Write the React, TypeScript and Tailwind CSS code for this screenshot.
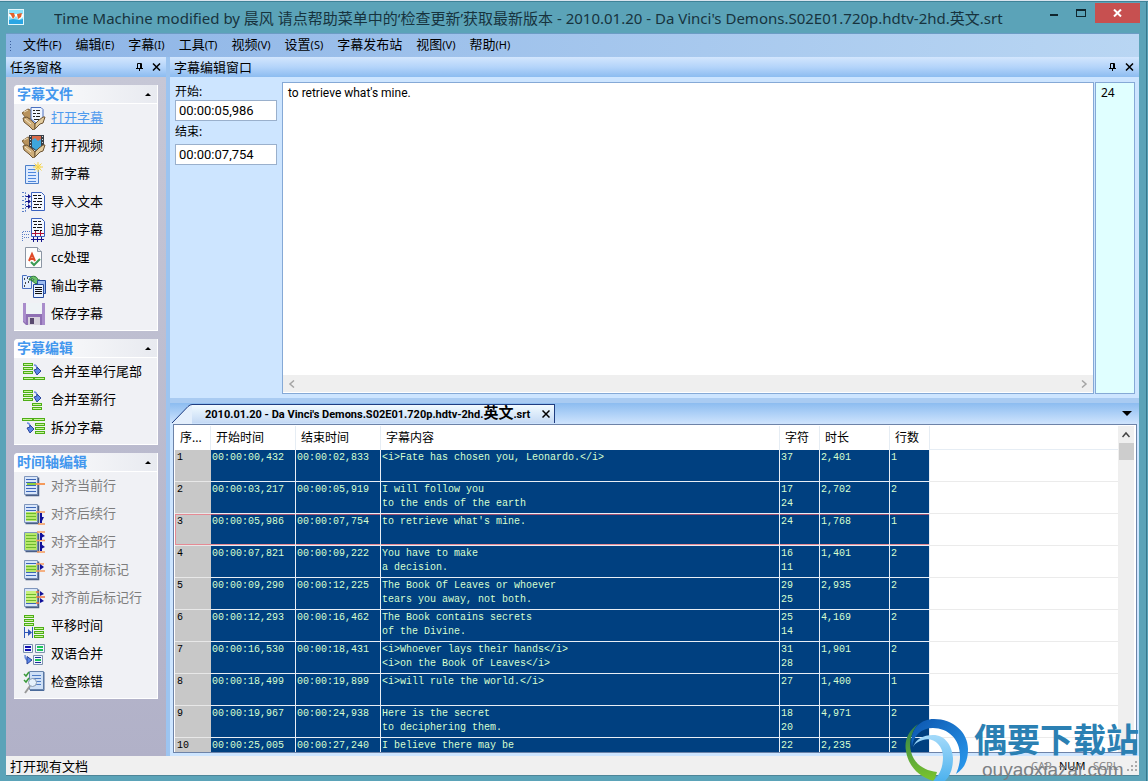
import type { ReactNode } from "react";

/* ---------- data ---------- */

const MENUS = [
  ["文件", "(F)"],
  ["编辑", "(E)"],
  ["字幕", "(I)"],
  ["工具", "(T)"],
  ["视频", "(V)"],
  ["设置", "(S)"],
  ["字幕发布站", ""],
  ["视图", "(V)"],
  ["帮助", "(H)"],
];

const ROWS = [
  { start: "00:00:00,432", end: "00:00:02,833", text: ["<i>Fate has chosen you, Leonardo.</i>"], chars: ["37"], time: "2,401", lines: "1" },
  { start: "00:00:03,217", end: "00:00:05,919", text: ["I will follow you", "to the ends of the earth"], chars: ["17", "24"], time: "2,702", lines: "2" },
  { start: "00:00:05,986", end: "00:00:07,754", text: ["to retrieve what's mine."], chars: ["24"], time: "1,768", lines: "1" },
  { start: "00:00:07,821", end: "00:00:09,222", text: ["You have to make", "a decision."], chars: ["16", "11"], time: "1,401", lines: "2" },
  { start: "00:00:09,290", end: "00:00:12,225", text: ["The Book Of Leaves or whoever", "tears you away, not both."], chars: ["29", "25"], time: "2,935", lines: "2" },
  { start: "00:00:12,293", end: "00:00:16,462", text: ["The Book contains secrets", "of the Divine."], chars: ["25", "14"], time: "4,169", lines: "2" },
  { start: "00:00:16,530", end: "00:00:18,431", text: ["<i>Whoever lays their hands</i>", "<i>on the Book Of Leaves</i>"], chars: ["31", "28"], time: "1,901", lines: "2" },
  { start: "00:00:18,499", end: "00:00:19,899", text: ["<i>will rule the world.</i>"], chars: ["27"], time: "1,400", lines: "1" },
  { start: "00:00:19,967", end: "00:00:24,938", text: ["Here is the secret", "to deciphering them."], chars: ["18", "20"], time: "4,971", lines: "2" },
  { start: "00:00:25,005", end: "00:00:27,240", text: ["I believe there may be"], chars: ["22"], time: "2,235", lines: "2" },
];

const CURRENT_ROW = 2;

/* ---------- icon parts ---------- */

const Svg = ({ children }: { children: ReactNode }) => (
  <svg width="24" height="24" viewBox="0 0 24 24" fill="none" aria-hidden="true" className="shrink-0">
    {children}
  </svg>
);

// two cupped hands, whatever they hold is drawn between back and front
const Hands = ({ children }: { children: ReactNode }) => (
  <>
    <path d="M0 7l6-4 4 2v8l-6-1z" fill="#b8925c" stroke="#7a5c34" />
    <path d="M2 6l4-2" stroke="#f4e6c6" />
    {children}
    <path d="M1 12l4-1 5 4 3 3v5l-2 1-4-4-5-4z" fill="#cfae7a" stroke="#6d5433" />
    <path d="M23 11l-2 6-3 1-5 5v-5l4-4 4-3z" fill="#e2cb9e" stroke="#6d5433" />
    <path d="M3 13l6 5" stroke="#f6ead0" />
  </>
);

const Page = ({ color = "#3b66b8" }: { color?: string }) => (
  <>
    <path d="M2.500 2.500h13v18h-13z" fill="#d9e6fa" stroke="#7f96bd" />
    <path d="M16.500 3.500v18h-13" stroke="#4a5f86" strokeWidth="1.500" />
    <path d="M4 5.500h10M4 8.500h10M4 11.500h10M4 14.500h10M4 17.500h10" stroke={color} />
  </>
);

const Bars = ({ x, y, n = 3, w = 9 }: { x: number; y: number; n?: number; w?: number }) => (
  <>
    {Array.from({ length: n }, (_, i) => (
      <rect key={i} x={x + 0.5} y={y + 0.5 + i * 4} width={w} height="2" fill="#c9f59b" stroke="#4eae17" />
    ))}
  </>
);

const BlueArrow = ({ x, y }: { x: number; y: number }) => (
  <g transform={`translate(${x} ${y})`}>
    <path d="M0 0c2 0 3 2 3 4" stroke="#6d8de0" strokeWidth="1.500" />
    <path d="M0 5l3-1V2l4 4-4 4z" fill="#5b86e6" stroke="#2b469c" />
  </g>
);

const Dots = ({ x, y }: { x: number; y: number }) => (
  <g transform={`translate(${x} ${y})`}>
    <path d="M0.500 0.500h10l3 3v15h-13z" fill="#f4f8ff" stroke="#3a62c0" />
    <path d="M2 3.500h4m1 0h3M3 6.500h3m1 0h4M2 9.500h3m1 0h5M3 12.500h5m1 0h2M2 15.500h4m1 0h3" stroke="#111" />
  </g>
);

const ICONS: Record<string, ReactNode> = {
  openSub: (
    <Svg>
      <Hands>
        <path d="M9 1.500h10l2 2V13l-7 4-5-4z" fill="#eff5ff" stroke="#4a70c0" />
        <path d="M11 4.500h2m1 0h4M11 7.500h3m1 0h3M11 10.500h2m1 0h4M12 13.500h5" stroke="#222" />
      </Hands>
    </Svg>
  ),
  openVideo: (
    <Svg>
      <Hands>
        <path d="M7 1h15v12l-8 4-7-4z" fill="#3a4048" />
        <path d="M10 2h9v5h-9z" fill="#d96a48" />
        <path d="M10 6l3-2 3 3 3-2v8l-5 3-4-3z" fill="#3da6dc" />
        <path d="M8.500 2v10M20.500 2v11" stroke="#d8dde2" strokeDasharray="1 2" />
      </Hands>
    </Svg>
  ),
  newSub: (
    <Svg>
      <path d="M3.500 3.500h13v18h-13z" fill="#dceaff" stroke="#4d7fc8" />
      <path d="M6 7.500h8M6 10.500h8M6 13.500h8M6 16.500h8M6 19.500h8" stroke="#4d86dc" />
      <circle cx="16" cy="5" r="3" fill="#fff09a" />
      <path d="M16 0v10M11 5h10M12.500 1.500l7 7M19.500 1.500l-7 7" stroke="#f0cf50" />
    </Svg>
  ),
  importText: (
    <Svg>
      <path d="M0 2.500h3.500v19H0M0 6.500h2M0 10.500h2M0 14.500h2M0 18.500h2" stroke="#5b7fc8" strokeDasharray="2 1" />
      <Dots x={9} y={2} />
      <path d="M4 6.500h3M4 11.500h3M4 16.500h3" stroke="#14148a" />
      <path d="M6 4l3 2.500L6 9zM6 9l3 2.500L6 14zM6 14l3 2.500L6 19z" fill="#14148a" />
    </Svg>
  ),
  appendSub: (
    <Svg>
      <path d="M0.500 23V13.500H8M2 16.500h6M2 19.500h6" stroke="#5b7fc8" strokeDasharray="1 1" />
      <Dots x={9} y={0} />
      <path d="M10 15.500h12M13.500 13v5M18.500 13v5" stroke="#b01030" />
      <path d="M9 21.500h13M11.500 19v5M15.500 19v5M19.500 19v5" stroke="#14148a" />
    </Svg>
  ),
  cc: (
    <Svg>
      <path d="M3.500 1.500h12l4 4v16h-16z" fill="#fdfdfd" stroke="#8c96a4" />
      <path d="M15.500 1.500v4h4" fill="#dfe5ec" stroke="#8c96a4" />
      <path d="M7 15l3-7 3 7M8 13h4" stroke="#e04a28" strokeWidth="2" />
      <path d="M9 16l3 3 6-6" stroke="#3c9a54" strokeWidth="2" />
    </Svg>
  ),
  exportSub: (
    <Svg>
      <path d="M0.500 1.500h4l1 1h4v12h-9z" fill="#e3eeff" stroke="#4a70c0" />
      <path d="M2 5h1M5 4h1M3 9h1M6 8h1M2 12h1" stroke="#111" strokeWidth="1.500" />
      <path d="M7 6c1-5 8-5 9 0h2l-4 4-5-4h3c-1-2-3-2-3 0z" fill="#6cc06a" stroke="#2c7a38" />
      <path d="M15.500 6.500h8v13h-8z" fill="#9dbcf0" stroke="#244a9c" />
      <path d="M11.500 10.500h10v13h-10z" fill="#e8f1ff" stroke="#244a9c" />
      <path d="M13 13.500h7M13 15.500h7M13 17.500h7M13 19.500h7" stroke="#111" />
    </Svg>
  ),
  save: (
    <Svg>
      <path d="M1 1h22v22H4l-3-3z" fill="#8f70b4" />
      <path d="M1 1h3v20l-3-2zM20 1h3v22h-3z" fill="#a98ccb" />
      <path d="M4 1h16v11H4z" fill="#eef3f6" />
      <path d="M6 15h12v8H6z" fill="#d7d2dd" />
      <path d="M8 16h4v6H8z" fill="#58486e" />
    </Svg>
  ),
  mergeTail: (
    <Svg>
      <Bars x={1} y={3} />
      <BlueArrow x={12} y={5} />
      <Bars x={1} y={17} n={1} w={10} />
      <Bars x={12} y={17} n={1} w={10} />
    </Svg>
  ),
  mergeNew: (
    <Svg>
      <Bars x={1} y={2} />
      <BlueArrow x={12} y={4} />
      <Bars x={10} y={15} n={2} />
    </Svg>
  ),
  split: (
    <Svg>
      <Bars x={0} y={2} n={1} w={10} />
      <Bars x={11} y={2} n={1} w={11} />
      <BlueArrow x={5} y={7} />
      <Bars x={13} y={7} />
    </Svg>
  ),
  alignCurrent: (
    <Svg>
      <Page />
      <path d="M5 10h9" stroke="#8fce3c" strokeWidth="2" />
      <path d="M14 10h9" stroke="#f59a5c" strokeWidth="2" />
    </Svg>
  ),
  alignNext: (
    <Svg>
      <Page />
      <path d="M4 10h11v9H4z" fill="#b7e86b" />
      <path d="M4 11.500h10M4 14.500h10M4 17.500h10" stroke="#6cba2c" />
      <path d="M14 10h9M16 22h7" stroke="#f59a5c" strokeWidth="1.500" />
      <path d="M19 11v10" stroke="#10109a" strokeWidth="2" />
      <path d="M18 15h4l-3 6z" fill="#10109a" />
    </Svg>
  ),
  alignAll: (
    <Svg>
      <Page />
      <path d="M3 3h12v17H3z" fill="#b7e86b" />
      <path d="M4 5.500h10M4 8.500h10M4 11.500h10M4 14.500h10M4 17.500h10" stroke="#6cba2c" />
      <path d="M15 2h8M14 10.500h9M15 22h8" stroke="#f59a5c" strokeWidth="1.500" />
      <path d="M19 3v7M19 12v9" stroke="#10109a" strokeWidth="2" />
      <path d="M19 3l4 3-4 2zM19 14l4 3-4 2z" fill="#10109a" />
    </Svg>
  ),
  alignPrev: (
    <Svg>
      <Page />
      <path d="M4 7h11v7H4z" fill="#b7e86b" />
      <path d="M4 8.500h10M4 11.500h10" stroke="#6cba2c" />
      <path d="M14 6h8M14 13h9" stroke="#f59a5c" strokeWidth="1.500" />
      <path d="M18 6l4 3-4 3z" fill="#10109a" />
    </Svg>
  ),
  alignBoth: (
    <Svg>
      <Page />
      <path d="M4 5h11v12H4z" fill="#c9f07e" />
      <path d="M4 8.500h10M4 11.500h10M4 14.500h10" stroke="#6cba2c" />
      <path d="M14 6h3M14 11h9M14 17h3" stroke="#f0703c" strokeWidth="1.500" />
      <path d="M18 5l4 3-4 2zM18 12l4 3-4 2z" fill="#10109a" />
    </Svg>
  ),
  shift: (
    <Svg>
      <Bars x={2} y={1} />
      <Bars x={12} y={13} />
      <path d="M2.500 13v11M10.500 13v11M3 18.500h4" stroke="#2f56b8" />
      <path d="M6 15l4 3.500L6 22z" fill="#2f56b8" />
    </Svg>
  ),
  bilingual: (
    <Svg>
      <path d="M1.500 2.500h9v8h-9zM13.500 2.500h9v8h-9zM11.500 13.500h9v9h-9z" fill="#f0f6ff" stroke="#7c90ac" />
      <path d="M3 5h6M3 8h6" stroke="#1010b0" strokeWidth="2" />
      <path d="M15 5h6M15 8h6M13 18h6" stroke="#1cc45a" strokeWidth="2" />
      <path d="M13 15.500h6M13 20.500h6" stroke="#1a2a9a" />
      <path d="M3 13c0 3 1 5 3 5" stroke="#6d8de0" strokeWidth="1.500" />
      <path d="M5 14.500l5 3.500-5 4z" fill="#5b86e6" stroke="#2b469c" />
    </Svg>
  ),
  check: (
    <Svg>
      <path d="M7.500 1.500h14v18h-14z" fill="#cfe0f6" stroke="#6884ad" />
      <path d="M22 2v18.500H8" stroke="#4a6a9a" />
      <path d="M10 5.500h9M10 8.500h9M14 11.500h5M14 14.500h5" stroke="#4f7cc4" />
      <path d="M2 4l2 2 3-4M2 10l2 2 3-4" stroke="#3a9a3a" strokeWidth="1.500" />
      <circle cx="10.500" cy="12.500" r="4" fill="#e6f1fb" stroke="#8a9bb0" />
      <path d="M8 16l-5 7" stroke="#9a9a9a" strokeWidth="2" />
    </Svg>
  ),
};

const SECTIONS = [
  {
    title: "字幕文件",
    items: [
      { icon: "openSub", label: "打开字幕", hot: true },
      { icon: "openVideo", label: "打开视频" },
      { icon: "newSub", label: "新字幕" },
      { icon: "importText", label: "导入文本" },
      { icon: "appendSub", label: "追加字幕" },
      { icon: "cc", label: "cc处理" },
      { icon: "exportSub", label: "输出字幕" },
      { icon: "save", label: "保存字幕" },
    ],
  },
  {
    title: "字幕编辑",
    items: [
      { icon: "mergeTail", label: "合并至单行尾部" },
      { icon: "mergeNew", label: "合并至新行" },
      { icon: "split", label: "拆分字幕" },
    ],
  },
  {
    title: "时间轴编辑",
    items: [
      { icon: "alignCurrent", label: "对齐当前行", disabled: true },
      { icon: "alignNext", label: "对齐后续行", disabled: true },
      { icon: "alignAll", label: "对齐全部行", disabled: true },
      { icon: "alignPrev", label: "对齐至前标记", disabled: true },
      { icon: "alignBoth", label: "对齐前后标记行", disabled: true },
      { icon: "shift", label: "平移时间" },
      { icon: "bilingual", label: "双语合并" },
      { icon: "check", label: "检查除错" },
    ],
  },
];

/* ---------- window chrome ---------- */

const TitleBar = () => (
  <header className="-mr-px flex h-[31px] shrink-0 items-start pt-px pl-[2px]">
    <svg width="16" height="16" viewBox="0 0 16 16" className="mt-[6px] shrink-0" aria-hidden="true">
      <rect x="0.500" y="0.500" width="15" height="15" fill="#8be2fa" stroke="#e4f7fc" />
      <path d="M1 5h14v3l-4 3-3-4-3 3-4-3z" fill="#fff" />
      <path d="M1 4h5l1 3-2 3-2-4zM9 5l5-1-1 4-3 2z" fill="#e2622c" />
      <path d="M1 11l4-1 6 1 4-1v5H1z" fill="#2aa6e4" />
    </svg>
    <h1 className="ml-[30px] flex-1 truncate text-[15px] leading-[30px] text-[#17333e]">
      Time Machine modified by 晨风 请点帮助菜单中的‘检查更新’获取最新版本 - 2010.01.20 - Da Vinci's
      Demons.S02E01.720p.hdtv-2hd.英文.srt
    </h1>
    <button aria-label="最小化" className="flex h-5 w-[26px] items-center justify-center pt-1">
      <span className="h-[2px] w-2 bg-[#10262e]" />
    </button>
    <button aria-label="最大化" className="flex h-5 w-[28px] items-center justify-center">
      <span className="h-2 w-[10px] border border-t-2 border-[#10262e]" />
    </button>
    <button aria-label="关闭" className="flex h-5 w-[45px] items-center justify-center bg-[#c75050]">
      <svg width="9" height="8" viewBox="0 0 9 8" stroke="#fff" strokeWidth="2">
        <path d="M1 0.500l7 7M8 0.500l-7 7" />
      </svg>
    </button>
  </header>
);

const MenuBar = () => (
  <nav className="flex h-6 shrink-0 items-center gap-3 border-t border-[#6b9cc4] bg-linear-to-r from-[#8db4e6] to-[#b9d6f3] pl-1 text-[13px]">
    <span className="flex flex-col gap-[2px]">
      {[0, 1, 2, 3].map((dot) => (
        <span key={dot} className="size-[1px] bg-[#3c5f9c]" />
      ))}
    </span>
    <div className="flex gap-[14px] pb-[2px]">
      {MENUS.map(([name, key]) => (
        <button key={name} className="flex items-baseline whitespace-nowrap leading-5">
          {name}
          <span className="text-[11px]">{key}</span>
        </button>
      ))}
    </div>
  </nav>
);

const PaneHeader = ({ title }: { title: string }) => (
  <div className="flex h-5 shrink-0 items-center bg-linear-to-b from-[#d3e6fd] via-[#b4d4fa] to-[#8cbcf0] pr-[3px] pb-px pl-1 text-[13px]">
    <h2 className="flex-1 leading-[18px]">{title}</h2>
    <button aria-label="固定" className="p-[5px]">
      <svg width="7" height="8" viewBox="0 0 7 8" stroke="#000" fill="none">
        <path d="M1.500 5V0.500h4V5M4.500 0v5M0 5.500h7M3.500 5v3" />
      </svg>
    </button>
    <button aria-label="关闭窗格" className="ml-[2px] p-[2px]">
      <svg width="9" height="8" viewBox="0 0 9 8" stroke="#000" strokeWidth="1.500">
        <path d="M1 0.500l7 7M8 0.500l-7 7" />
      </svg>
    </button>
  </div>
);

const TaskPane = () => (
  <aside className="flex w-40 shrink-0 flex-col">
    <PaneHeader title="任务窗格" />
    <div className="flex flex-1 flex-col gap-2 overflow-hidden bg-linear-to-b from-[#c6c7d6] to-[#b1b1c8] px-2 pt-2">
      {SECTIONS.map((section) => (
        <section key={section.title} className="shrink-0 rounded-tl border-r border-b border-white bg-[#f0f1f5] pb-[2px]">
          <div className="flex h-[19px] items-center justify-between rounded-tl border-b border-white bg-linear-to-r from-white to-[#e8eaf0] pr-[6px] pl-[3px]">
            <h3 className="text-[14px] leading-5 font-bold text-[#4397ee]">{section.title}</h3>
            <span className="border-x-[3px] border-b-[3px] border-x-transparent border-b-black" />
          </div>
          {section.items.map((item) => (
            <button
              key={item.label}
              disabled={"disabled" in item}
              className="flex h-7 w-full items-center gap-[5px] pl-2 text-left text-[13px] whitespace-nowrap disabled:text-[#7d7d7d]"
            >
              {ICONS[item.icon]}
              <span className={"hot" in item ? "text-[#4f9bee] underline" : ""}>{item.label}</span>
            </button>
          ))}
        </section>
      ))}
    </div>
  </aside>
);

const Chevron = ({ d }: { d: string }) => (
  <svg width="8" height="8" viewBox="0 0 8 8" fill="none" stroke="currentColor" strokeWidth="1.500">
    <path d={d} />
  </svg>
);

const TIME_INPUT =
  "h-[21px] border border-[#9ab0cc] bg-white px-[3px] font-['Roboto',sans-serif] text-[13px]";

const EditorPane = () => (
  <section className="flex h-[341px] shrink-0 flex-col bg-[#cde5ff]">
    <PaneHeader title="字幕编辑窗口" />
    <div className="flex flex-1 pt-[5px] pr-1 pb-1 pl-[5px]">
      <div className="flex w-[102px] shrink-0 flex-col text-[12px]">
        <label htmlFor="start" className="h-[18px] leading-5">
          开始:
        </label>
        <input id="start" defaultValue="00:00:05,986" className={TIME_INPUT} />
        <label htmlFor="end" className="h-[23px] leading-[22px]">
          结束:
        </label>
        <input id="end" defaultValue="00:00:07,754" className={TIME_INPUT} />
      </div>
      <div className="ml-[5px] flex min-w-0 flex-1 flex-col border border-[#85a9d6] bg-white">
        <textarea
          aria-label="字幕文本"
          defaultValue="to retrieve what's mine."
          className="block w-full flex-1 resize-none px-[5px] py-[2px] font-['Roboto',sans-serif] text-[12px] leading-4 outline-none"
        />
        <div className="mb-px flex h-[17px] items-center justify-between bg-[#efefef] px-[5px] text-[#a5a5a5]">
          <button aria-label="向左滚动">
            <Chevron d="M6 0.500L2 4l4 3.500" />
          </button>
          <button aria-label="向右滚动">
            <Chevron d="M2 0.500L6 4l-4 3.500" />
          </button>
        </div>
      </div>
      <output className="ml-px w-10 border border-[#85a9d6] bg-[#e0ffff] px-[5px] py-[2px] text-[12px] leading-4">24</output>
    </div>
  </section>
);

/* ---------- subtitle list ---------- */

const COLUMNS = ["序...", "开始时间", "结束时间", "字幕内容", "字符", "时长", "行数"];

const FileTab = () => (
  <div className="flex h-[21px] shrink-0 items-start bg-linear-to-b from-[#8cbcf0] to-[#cfe4fd] pr-[7px]">
    <div className="flex h-5 pt-px">
      <svg width="22" height="20" viewBox="0 0 22 20" aria-hidden="true">
        <path d="M2 20L18 2.500Q20 0.500 22 0.500V20z" fill="#e4effc" />
        <path d="M2 19L18 2.500Q20 0.500 22 0.500" fill="none" stroke="#1f3d80" />
      </svg>
      <div className="flex items-center border-t border-r border-[#1f3d80] bg-linear-to-b from-[#f2fbff] to-[#c4d9f4] pr-1 pl-[13px]">
        <span className="font-['Roboto','Noto_Sans_CJK_SC',sans-serif] text-[11px] leading-4 font-bold whitespace-nowrap">
          2010.01.20 - Da Vinci's Demons.S02E01.720p.hdtv-2hd.<span className="text-[15px]">英文</span>.srt
        </span>
        <button aria-label="关闭标签" className="ml-3">
          <svg width="8" height="8" viewBox="0 0 8 8" stroke="#000" strokeWidth="1.500">
            <path d="M0.500 0.500l7 7M7.500 0.500l-7 7" />
          </svg>
        </button>
      </div>
    </div>
    <button aria-label="标签列表" className="mt-2 ml-auto">
      <span className="block border-x-[5px] border-t-[5px] border-x-transparent border-t-black" />
    </button>
  </div>
);

const SubtitleTable = () => (
  <table className="w-full table-fixed border-separate border-spacing-0 text-left">
    <colgroup>
      <col className="w-9" />
      <col className="w-[85px]" />
      <col className="w-[85px]" />
      <col className="w-[399px]" />
      <col className="w-10" />
      <col className="w-[70px]" />
      <col className="w-10" />
      <col />
    </colgroup>
    <thead>
      <tr className="h-6 text-[12px] leading-4">
        {COLUMNS.map((name) => (
          <th key={name} className="border-r border-[#e6edf4] p-0 pl-[5px] font-normal whitespace-nowrap">
            {name}
          </th>
        ))}
        <th aria-hidden="true" className="border-b border-[#e6edf4] p-0" />
      </tr>
    </thead>
    <tbody className="font-['Liberation_Mono','Noto_Sans_CJK_SC',monospace] text-[10px] leading-[14px] text-[#d6ffd0]">
      {ROWS.map((row, i) => {
        const ring = i === CURRENT_ROW ? "shadow-[inset_0_1px_#a05070,inset_0_-1px_#e58a94]" : "";
        const cell = `h-8 border-r border-b border-[#e8eef5] bg-[#004080] p-0 pt-px pl-px align-top whitespace-nowrap ${ring}`;
        return (
          <tr key={row.start}>
            <td
              className={`h-8 border-b border-[#e8e8e8] bg-[#c8c8c8] p-0 pt-px pl-[2px] align-top text-black ${
                i === CURRENT_ROW ? "shadow-[inset_1px_1px_#e58a94,inset_0_-1px_#e58a94]" : ""
              }`}
            >
              {i + 1}
            </td>
            <td className={cell}>{row.start}</td>
            <td className={cell}>{row.end}</td>
            <td className={cell}>
              {row.text.map((line) => (
                <div key={line}>{line}</div>
              ))}
            </td>
            <td className={cell}>
              {row.chars.map((n) => (
                <div key={n}>{n}</div>
              ))}
            </td>
            <td className={cell}>{row.time}</td>
            <td className={cell}>{row.lines}</td>
            <td className="border-b border-[#ebebeb] p-0" />
          </tr>
        );
      })}
    </tbody>
  </table>
);

const ListPane = () => (
  <section className="flex min-h-0 flex-1 flex-col border-t-[5px] border-[#a9cbf2] bg-[#cde5ff]">
    <FileTab />
    <div className="mr-[2px] mb-[3px] ml-[3px] flex min-h-0 flex-1 border border-[#6d83a8] bg-white pt-px pl-px">
      <div className="min-w-0 flex-1 overflow-hidden">
        <SubtitleTable />
      </div>
      <div className="mr-[2px] flex w-4 flex-col items-center bg-[#efefef] text-[#444]">
        <button aria-label="向上滚动" className="flex h-[17px] items-center">
          <Chevron d="M0.500 6L4 2l3.500 4" />
        </button>
        <span className="h-[17px] w-[15px] bg-[#cdcdcd]" />
      </div>
    </div>
  </section>
);

const StatusBar = () => (
  <footer className="flex h-5 shrink-0 items-center border-b border-[#4d8598] bg-[#f0f0f0] pl-1 text-[13px] leading-5">
    <span className="flex-1">打开现有文档</span>
    <span className="w-7 text-[11px] text-[#888]">CAP</span>
    <span className="w-[34px] text-[11px]">NUM</span>
    <span className="w-[34px] text-[11px] text-[#888]">SCRL</span>
    <svg width="10" height="10" viewBox="0 0 10 10" fill="#aaa" className="mr-[2px]" aria-hidden="true">
      <path d="M8 0h2v2H8zM8 4h2v2H8zM8 8h2v2H8zM4 4h2v2H4zM4 8h2v2H4zM0 8h2v2H0z" />
    </svg>
  </footer>
);

const SiteBadge = () => (
  <div className="pointer-events-none absolute right-[9px] bottom-0 flex items-end gap-[5px]">
    <svg width="64" height="64" viewBox="0 0 64 64" aria-hidden="true">
      <defs>
        <linearGradient id="badgeBlue" x1="0" y1="0" x2="1" y2="1">
          <stop offset="0" stopColor="#0c55ae" />
          <stop offset="1" stopColor="#2a9cf0" />
        </linearGradient>
        <linearGradient id="badgeSky" x1="0" y1="0" x2="0" y2="1">
          <stop offset="0" stopColor="#a4dafa" />
          <stop offset="1" stopColor="#4db2ee" />
        </linearGradient>
        <linearGradient id="badgeGreen" x1="0" y1="0" x2="0" y2="1">
          <stop offset="0" stopColor="#2f7d4c" />
          <stop offset="1" stopColor="#7cc62c" />
        </linearGradient>
      </defs>
      <path d="M13 7C3 14-1 24 1 34c2 14 12 26 28 30l3-9C22 54 13 49 9 42 2 30 5 17 13 7z" fill="url(#badgeGreen)" />
      <path d="M7 30C4 14 14 2 29 2c19 0 34 13 34 30 0 12-4 20-12 25 2-5 4-10 4-18 0-17-12-28-27-28C16 11 8 19 7 30z" fill="url(#badgeBlue)" />
      <path d="M8 30c3-8 10-12 20-12 12 0 19 10 20 23 0 9-2 17-8 23H28c7-6 10-14 10-24C38 28 28 20 18 23c-4 1-8 3-10 7z" fill="url(#badgeSky)" />
    </svg>
    <div className="flex flex-col">
      <span className="text-[33px] leading-[38px] font-bold whitespace-nowrap text-[#2b80b3]">偶要下载站</span>
      <span className="pl-2 font-['Liberation_Sans',sans-serif] text-[19px] leading-[22px] text-[#7c8084]">ouyaoxiazai.com</span>
    </div>
  </div>
);

/* ---------- page ---------- */

const App = () => {
  return (
    <div className="relative flex h-screen min-h-[740px] flex-col overflow-hidden bg-[#5ba3b8] font-['Noto_Sans','Noto_Sans_CJK_SC',sans-serif] text-black">
      <div className="h-[2px] shrink-0 border-b border-[#3f8398] bg-[#d9e4ee]" />
      <div className="mr-px flex min-h-0 flex-1 flex-col border-r border-[#37798e] pr-[7px] pb-[5px] pl-[6px]">
        <TitleBar />
        <MenuBar />
        <div className="flex min-h-0 flex-1 bg-[#9cc4f0]">
          <TaskPane />
          <main className="ml-1 flex min-w-0 flex-1 flex-col">
            <EditorPane />
            <ListPane />
          </main>
        </div>
        <StatusBar />
      </div>
      <SiteBadge />
    </div>
  );
};

export default App;
